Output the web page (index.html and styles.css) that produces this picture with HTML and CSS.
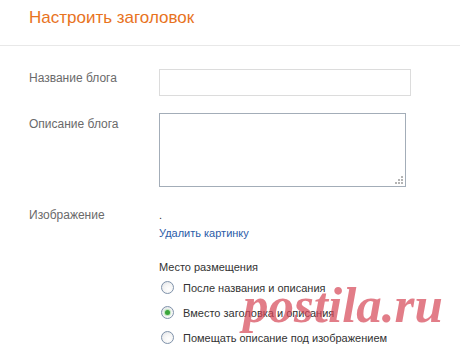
FILE: index.html
```html
<!DOCTYPE html>
<html lang="ru">
<head>
<meta charset="utf-8">
<title>Настроить заголовок</title>
<link rel="stylesheet" href="styles.css">
</head>
<body>
<div class="page">
  <div class="header">
    <h1 class="title">Настроить заголовок</h1>
  </div>
  <div class="form">
    <div class="row row-name">
      <div class="label label-name">Название блога</div>
      <div class="field"><input class="input" type="text"></div>
    </div>
    <div class="row row-desc">
      <div class="label label-desc">Описание блога</div>
      <div class="field">
        <div class="area-wrap">
          <textarea class="area"></textarea>
          <svg class="grip" width="10" height="10" viewBox="0 0 10 10">
            <rect x="7" y="1" width="2" height="2" fill="#b4b4b4"/>
            <rect x="4" y="4" width="2" height="2" fill="#b4b4b4"/>
            <rect x="7" y="4" width="2" height="2" fill="#b4b4b4"/>
            <rect x="1" y="7" width="2" height="2" fill="#b4b4b4"/>
            <rect x="4" y="7" width="2" height="2" fill="#b4b4b4"/>
            <rect x="7" y="7" width="2" height="2" fill="#b4b4b4"/>
          </svg>
        </div>
      </div>
    </div>
    <div class="row row-img">
      <div class="label">Изображение</div>
      <div class="field">
        <div class="dot-line">.</div>
        <a class="link" href="#">Удалить картинку</a>
        <div class="place">Место размещения</div>
        <div class="radios">
          <div class="radio-row"><span class="radio"></span><span class="radio-text">После названия и описания</span></div>
          <div class="radio-row"><span class="radio checked"></span><span class="radio-text">Вместо заголовка и описания</span></div>
          <div class="radio-row"><span class="radio"></span><span class="radio-text">Помещать описание под изображением</span></div>
        </div>
      </div>
    </div>
  </div>
  <div class="watermark">postila.ru</div>
</div>
</body>
</html>
```
FILE: styles.css
```css
html, body {
  margin: 0;
  padding: 0;
  background: #ffffff;
}
body {
  font-family: "Liberation Sans", Arial, sans-serif;
  font-size: 11px;
  color: #333333;
}
.page {
  position: relative;
  width: 460px;
  height: 351px;
  overflow: hidden;
}
.header {
  height: 46px;
  box-sizing: border-box;
  border-bottom: 1px solid #e8e8e8;
  padding-left: 29px;
}
.title {
  margin: 0;
  padding-top: 7px;
  font-size: 17px;
  line-height: 21px;
  font-weight: normal;
  color: #e8731e;
}
.form {
  padding-left: 29px;
}
.row {
  display: grid;
  grid-template-columns: 130px 1fr;
}
.label {
  color: #6a6a6a;
  font-size: 12px;
  line-height: 16px;
}
.row-name {
  margin-top: 23px;
}
.label-name {
  padding-top: 1px;
}
.input {
  display: block;
  box-sizing: border-box;
  width: 252px;
  height: 27px;
  margin: 0;
  padding: 2px 4px;
  border: 1px solid #dcdcdc;
  background: #fff;
  font: inherit;
}
.row-desc {
  margin-top: 17px;
}
.label-desc {
  padding-top: 3px;
}
.area-wrap {
  position: relative;
  width: 247px;
  height: 74px;
}
.area {
  display: block;
  box-sizing: border-box;
  width: 247px;
  height: 74px;
  margin: 0;
  padding: 2px 4px;
  border: 1px solid #a3adb8;
  background: #fff;
  resize: none;
  font: inherit;
}
.grip {
  position: absolute;
  right: 2px;
  bottom: 2px;
}
.row-img {
  margin-top: 20px;
}
.dot-line {
  line-height: 16px;
  color: #333;
}
.link {
  display: block;
  margin-top: 2px;
  line-height: 16px;
  color: #2b5ca8;
  text-decoration: none;
}
.place {
  margin-top: 18px;
  line-height: 16px;
  color: #333333;
}
.radio-row {
  display: flex;
  align-items: center;
  height: 25px;
}
.radio {
  box-sizing: border-box;
  width: 13px;
  height: 13px;
  margin-left: 2px;
  margin-right: 9px;
  border: 1px solid #7f92aa;
  border-radius: 50%;
  background: radial-gradient(circle at 60% 65%, #ffffff 0%, #f4f4f4 50%, #d9dde3 100%);
  display: flex;
  align-items: center;
  justify-content: center;
}
.radio.checked::after {
  content: "";
  width: 5px;
  height: 5px;
  border-radius: 50%;
  background: #3aa53a;
  box-shadow: 0 0 1px 1px #b8e2b8;
}
.radio-text {
  color: #333333;
  line-height: 16px;
}
.watermark {
  position: absolute;
  left: 243px;
  top: 280px;
  font-family: "Liberation Serif", "Times New Roman", serif;
  font-style: italic;
  font-weight: bold;
  font-size: 51px;
  line-height: 50px;
  color: rgba(214, 70, 85, 0.7);
  white-space: nowrap;
}
```
